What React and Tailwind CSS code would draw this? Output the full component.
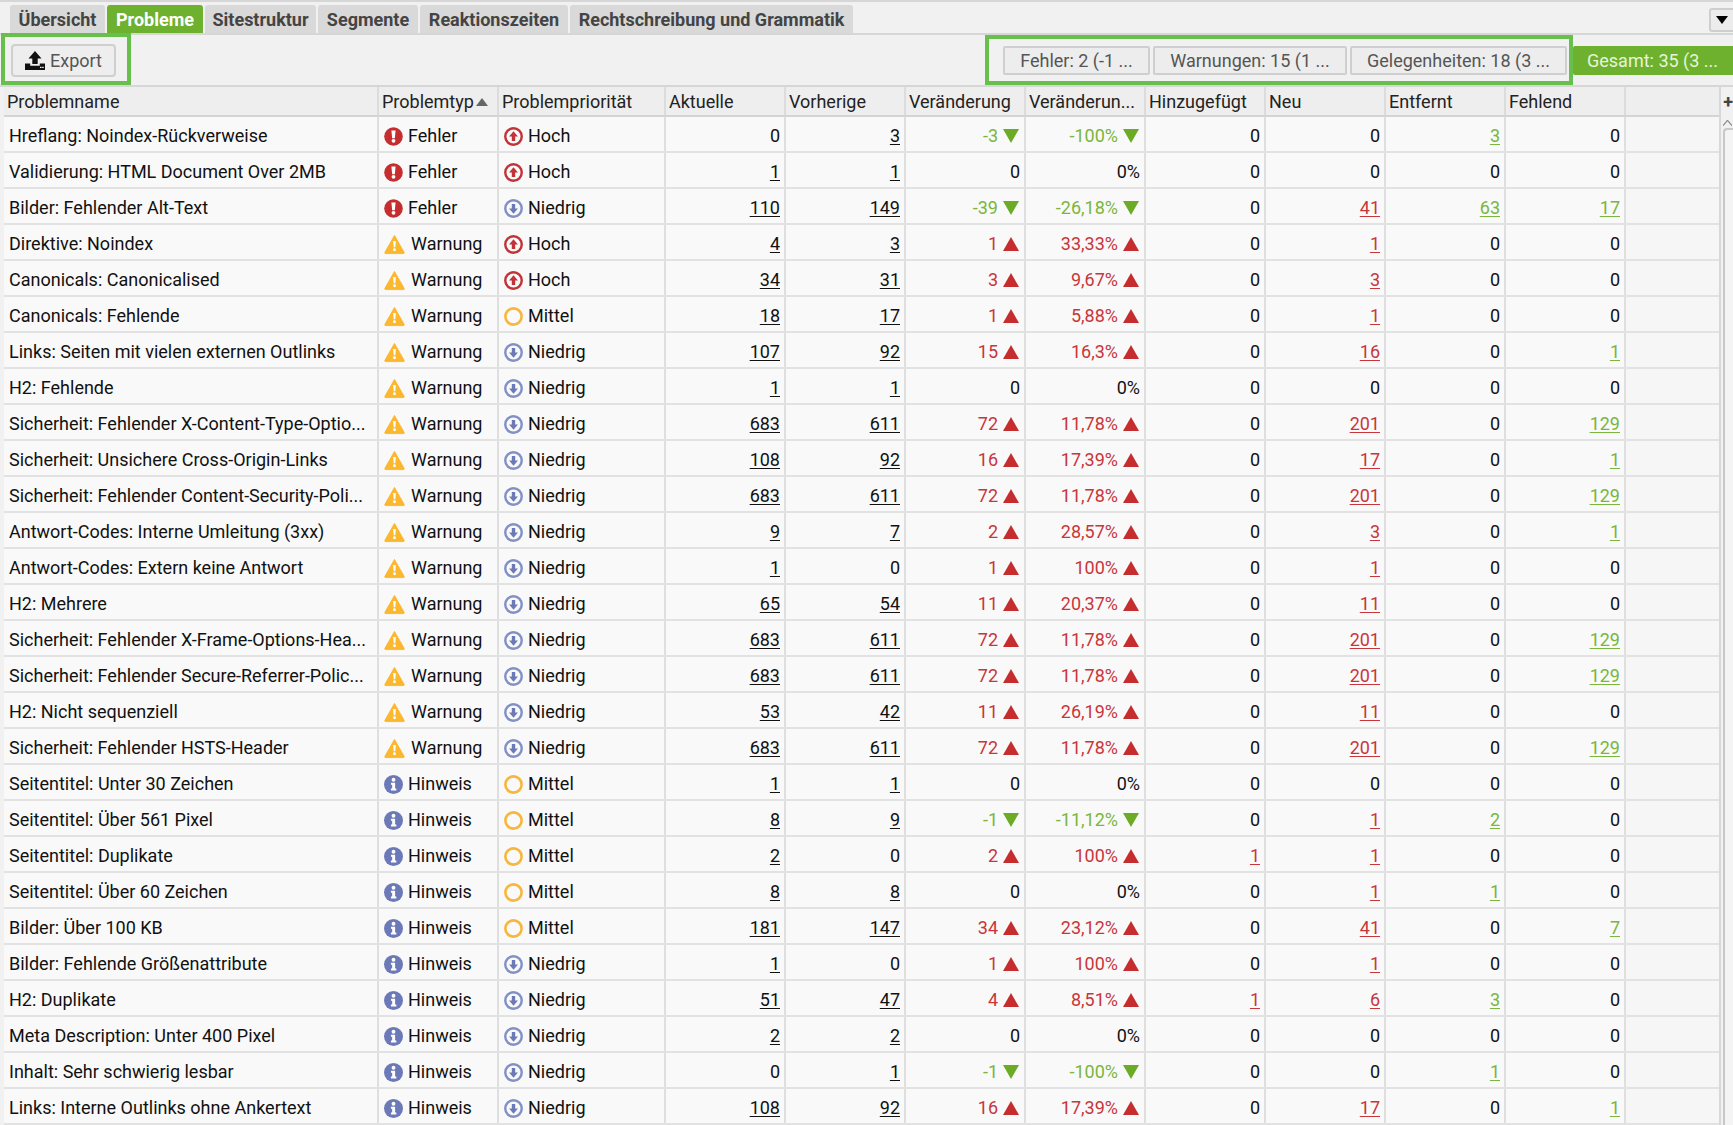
import React from "react";

// ===== ICONS =====
const FehlerIcon = () => (
  <svg viewBox="0 0 20 20" className="w-[19px] h-[19px] shrink-0">
    <circle cx="10" cy="10" r="9.8" fill="#c62d2f" />
    <path d="M7.8 3.6h4.4l-.8 8.2H8.6z" fill="#fff" />
    <circle cx="10" cy="14.6" r="2" fill="#fff" />
  </svg>
);

const WarnIcon = () => (
  <svg viewBox="0 0 22 21" className="w-[21px] h-[21px] shrink-0">
    <path d="M11 1 L21 18.6 Q21.6 20 20 20 H2 Q.4 20 1 18.6 Z" fill="#fbb72e" stroke="#fbb72e" strokeLinejoin="round" />
    <path d="M9.6 6.8h2.8l-.5 6.6h-1.8z" fill="#fff" />
    <circle cx="11" cy="16" r="1.5" fill="#fff" />
  </svg>
);

const InfoIcon = () => (
  <svg viewBox="0 0 20 20" className="w-[19px] h-[19px] shrink-0">
    <circle cx="10" cy="10" r="10" fill="#6c79b9" />
    <circle cx="10" cy="5" r="2" fill="#fff" />
    <path d="M7.3 8.2h4.4v6.1H13v2H7.3v-2h1.3v-4.1H7.3z" fill="#fff" />
  </svg>
);

const HighIcon = () => (
  <svg viewBox="0 0 18 18" className="w-[19px] h-[19px] shrink-0">
    <circle cx="9" cy="9" r="7.8" fill="none" stroke="#c23237" strokeWidth="2.3" />
    <path d="M9 4 13.2 9h-2.6v4.2H7.4V9H4.8z" fill="#c23237" />
  </svg>
);

const LowIcon = () => (
  <svg viewBox="0 0 18 18" className="w-[19px] h-[19px] shrink-0">
    <circle cx="9" cy="9" r="7.8" fill="none" stroke="#8090c8" strokeWidth="2.3" />
    <path d="M9 14 4.8 9h2.6V4.8h3.2V9h2.6z" fill="#6c79b9" />
  </svg>
);

const MidIcon = () => (
  <svg viewBox="0 0 18 18" className="w-[19px] h-[19px] shrink-0">
    <circle cx="9" cy="9" r="7.7" fill="none" stroke="#f8b73c" strokeWidth="2.5" />
  </svg>
);

const ExportIcon = () => (
  <svg viewBox="0 0 20 19" className="w-[20px] h-[19px] shrink-0">
    <path d="M10 0 16.5 7.5h-3.8v5.5H7.3V7.5H3.5z" fill="#111" />
    <path d="M0 12.5h5.2v2.2h9.6v-2.2H20V19H0z" fill="#111" />
    <rect x="15" y="15.8" width="1.5" height="1.2" fill="#fff" />
    <rect x="17.2" y="15.8" width="1.5" height="1.2" fill="#fff" />
  </svg>
);

const Up = () => (
  <svg viewBox="0 0 16 14" className="w-[16px] h-[14px] shrink-0">
    <path d="M8 0 16 14H0z" fill="#c62d2f" />
  </svg>
);

const Down = () => (
  <svg viewBox="0 0 16 14" className="w-[16px] h-[14px] shrink-0">
    <path d="M0 0h16L8 14z" fill="#6cab25" />
  </svg>
);

// ===== SAMPLE DATA =====
const E = "Fehler", W = "Warnung", H = "Hinweis";
const rows = [
  ["Hreflang: Noindex-Rückverweise", E, "Hoch", 0, 3, "-3", "-100%", 0, 0, 3, 0],
  ["Validierung: HTML Document Over 2MB", E, "Hoch", 1, 1, "0", "0%", 0, 0, 0, 0],
  ["Bilder: Fehlender Alt-Text", E, "Niedrig", 110, 149, "-39", "-26,18%", 0, 41, 63, 17],
  ["Direktive: Noindex", W, "Hoch", 4, 3, "1", "33,33%", 0, 1, 0, 0],
  ["Canonicals: Canonicalised", W, "Hoch", 34, 31, "3", "9,67%", 0, 3, 0, 0],
  ["Canonicals: Fehlende", W, "Mittel", 18, 17, "1", "5,88%", 0, 1, 0, 0],
  ["Links: Seiten mit vielen externen Outlinks", W, "Niedrig", 107, 92, "15", "16,3%", 0, 16, 0, 1],
  ["H2: Fehlende", W, "Niedrig", 1, 1, "0", "0%", 0, 0, 0, 0],
  ["Sicherheit: Fehlender X-Content-Type-Optio...", W, "Niedrig", 683, 611, "72", "11,78%", 0, 201, 0, 129],
  ["Sicherheit: Unsichere Cross-Origin-Links", W, "Niedrig", 108, 92, "16", "17,39%", 0, 17, 0, 1],
  ["Sicherheit: Fehlender Content-Security-Poli...", W, "Niedrig", 683, 611, "72", "11,78%", 0, 201, 0, 129],
  ["Antwort-Codes: Interne Umleitung (3xx)", W, "Niedrig", 9, 7, "2", "28,57%", 0, 3, 0, 1],
  ["Antwort-Codes: Extern keine Antwort", W, "Niedrig", 1, 0, "1", "100%", 0, 1, 0, 0],
  ["H2: Mehrere", W, "Niedrig", 65, 54, "11", "20,37%", 0, 11, 0, 0],
  ["Sicherheit: Fehlender X-Frame-Options-Hea...", W, "Niedrig", 683, 611, "72", "11,78%", 0, 201, 0, 129],
  ["Sicherheit: Fehlender Secure-Referrer-Polic...", W, "Niedrig", 683, 611, "72", "11,78%", 0, 201, 0, 129],
  ["H2: Nicht sequenziell", W, "Niedrig", 53, 42, "11", "26,19%", 0, 11, 0, 0],
  ["Sicherheit: Fehlender HSTS-Header", W, "Niedrig", 683, 611, "72", "11,78%", 0, 201, 0, 129],
  ["Seitentitel: Unter 30 Zeichen", H, "Mittel", 1, 1, "0", "0%", 0, 0, 0, 0],
  ["Seitentitel: Über 561 Pixel", H, "Mittel", 8, 9, "-1", "-11,12%", 0, 1, 2, 0],
  ["Seitentitel: Duplikate", H, "Mittel", 2, 0, "2", "100%", 1, 1, 0, 0],
  ["Seitentitel: Über 60 Zeichen", H, "Mittel", 8, 8, "0", "0%", 0, 1, 1, 0],
  ["Bilder: Über 100 KB", H, "Mittel", 181, 147, "34", "23,12%", 0, 41, 0, 7],
  ["Bilder: Fehlende Größenattribute", H, "Niedrig", 1, 0, "1", "100%", 0, 1, 0, 0],
  ["H2: Duplikate", H, "Niedrig", 51, 47, "4", "8,51%", 1, 6, 3, 0],
  ["Meta Description: Unter 400 Pixel", H, "Niedrig", 2, 2, "0", "0%", 0, 0, 0, 0],
  ["Inhalt: Sehr schwierig lesbar", H, "Niedrig", 0, 1, "-1", "-100%", 0, 0, 1, 0],
  ["Links: Interne Outlinks ohne Ankertext", H, "Niedrig", 108, 92, "16", "17,39%", 0, 17, 0, 1],
];

const tabs = [
  ["Übersicht", "w-[95px]"],
  ["Probleme", "w-[96px]"],
  ["Sitestruktur", "w-[111px]"],
  ["Segmente", "w-[100px]"],
  ["Reaktionszeiten", "w-[148px]"],
  ["Rechtschreibung und Grammatik", "w-[283px]"],
];

const headers = ["Problemname", "Problemtyp", "Problempriorität", "Aktuelle", "Vorherige", "Veränderung", "Veränderun...", "Hinzugefügt", "Neu", "Entfernt", "Fehlend", ""];

const gridCols = "grid grid-cols-[375px_120px_167px_repeat(8,120px)_1fr]";
const cell = "flex items-center border-r-2 border-[#dfdfdf] min-w-0 pt-[4px]";

// ===== CELLS =====
const NumCell = ({ value, color = "text-[#111]" }) => (
  <div className={`${cell} justify-end pr-[4px] ${color}`}>
    {value === 0 ? "0" : <span className="underline underline-offset-2">{value}</span>}
  </div>
);

const DeltaCell = ({ value }) => {
  const neg = value.startsWith("-");
  const zero = value === "0" || value === "0%";
  if (zero) return <div className={`${cell} justify-end pr-[4px]`}>{value}</div>;
  return (
    <div className={`${cell} justify-end gap-[5px] pr-[5px] ${neg ? "text-[#7ab63c]" : "text-[#c8363a]"}`}>
      {value}
      {neg ? <Down /> : <Up />}
    </div>
  );
};

const Row = ({ r }) => {
  const [name, type, prio, cur, prev, delta, pct, added, neu, removed, missing] = r;
  return (
    <div className={`${gridCols} h-[36px] border-b-2 border-[#e2e2e2] bg-[#f9f9f9]`}>
      <div className={`${cell} pl-[5px] whitespace-nowrap`}>{name}</div>
      <div className={`${cell} pl-[5px] ${type === H ? "gap-[5px]" : type === E ? "gap-[5px]" : "gap-[6px]"}`}>
        {type === E && <FehlerIcon />}
        {type === W && <WarnIcon />}
        {type === H && <InfoIcon />}
        {type}
      </div>
      <div className={`${cell} pl-[5px] gap-[5px]`}>
        {prio === "Hoch" && <HighIcon />}
        {prio === "Mittel" && <MidIcon />}
        {prio === "Niedrig" && <LowIcon />}
        {prio}
      </div>
      <NumCell value={cur} />
      <NumCell value={prev} />
      <DeltaCell value={delta} />
      <DeltaCell value={pct} />
      <NumCell value={added} color={added ? "text-[#c8363a]" : "text-[#111]"} />
      <NumCell value={neu} color={neu ? "text-[#c8363a]" : "text-[#111]"} />
      <NumCell value={removed} color={removed ? "text-[#7ab63c]" : "text-[#111]"} />
      <NumCell value={missing} color={missing ? "text-[#7ab63c]" : "text-[#111]"} />
      <div className="bg-[#f6f6f6]" />
    </div>
  );
};

const FilterBtn = ({ children, width }) => (
  <button className={`${width} h-[29px] flex items-center justify-center rounded-[2px] border-2 border-[#cfcfcf] bg-[#ededed] text-[#555]`}>
    {children}
  </button>
);

export default function App() {
  return (
    <div className="w-[1733px] h-[1125px] overflow-hidden bg-[#f1f1f1] text-[18px] leading-none text-[#111] font-['Roboto',sans-serif]">
      {/* ===== TABS ===== */}
      <div className="h-[35px] border-t-2 border-b-2 border-[#d6d6d6] flex justify-between pt-[3px]">
        <div className="flex gap-[2px] pl-[10px]">
          {tabs.map(([label, w]) => (
            <div
              key={label}
              className={`${w} flex items-center justify-center rounded-t-[3px] font-bold pt-[2px] ${label === "Probleme" ? "bg-[#6db12e] text-white" : "bg-[#d9d9d9] text-[#444]"}`}
            >
              {label}
            </div>
          ))}
        </div>
        <div className="w-[24px] h-[24px] mt-[3px] rounded-l-[3px] border-2 border-r-0 border-[#cfcfcf] bg-[#ececec] flex items-center justify-center">
          <span className="w-0 h-0 border-x-[6px] border-x-transparent border-t-[8px] border-t-black" />
        </div>
      </div>

      {/* ===== TOOLBAR ===== */}
      <div className="h-[50px] flex justify-between items-start pl-[1px]">
        <div className="w-[130px] h-[52px] -mt-[2px] border-[4px] border-[#68c04c] flex items-center pl-[6px] pt-[3px]">
          <button className="w-[105px] h-[33px] flex items-center gap-[5px] pl-[12px] rounded-[4px] border-2 border-[#cfcfcf] bg-[#eeeeee] text-[#555]">
            <ExportIcon />
            Export
          </button>
        </div>
        <div className="flex">
          <div className="w-[588px] h-[50px] border-[4px] border-[#68c04c] flex items-center gap-[3px] pl-[14px] pt-[1px]">
            <FilterBtn width="w-[147px]">Fehler: 2 (-1 ...</FilterBtn>
            <FilterBtn width="w-[194px]">Warnungen: 15 (1 ...</FilterBtn>
            <FilterBtn width="w-[217px]">Gelegenheiten: 18 (3 ...</FilterBtn>
          </div>
          <div className="w-[160px] h-[29px] mt-[11px] flex items-center pl-[14px] bg-[#6db12e] text-[#e8f4da] rounded-l-[2px] whitespace-nowrap">
            Gesamt: 35 (3 ...
          </div>
        </div>
      </div>

      {/* ===== TABLE ===== */}
      <div className="flex pl-[4px] border-t-2 border-[#d6d6d6]">
        <div className="w-[1718px]">
          <div className={`${gridCols} h-[30px] bg-[#eeeeee] border-b-2 border-[#d4d4d4] text-[#222]`}>
            {headers.map((h, i) => (
              <div
                key={i}
                className={`flex items-center pt-[2px] pl-[3px] whitespace-nowrap ${i === 11 ? "" : "border-r-2 border-[#dcdcdc]"}`}
              >
                {h}
                {i === 1 && (
                  <span className="ml-[2px] w-0 h-0 border-x-[6px] border-x-transparent border-b-[8px] border-b-[#666]" />
                )}
              </div>
            ))}
          </div>
          {rows.map((r, i) => (
            <Row key={i} r={r} />
          ))}
        </div>

        {/* ===== SCROLL COLUMN ===== */}
        <div className="flex-1 flex flex-col border-l-2 border-[#d8d8d8] pl-[2px]">
          <span className="h-[30px] flex items-center text-[#444] font-bold leading-none">+</span>
          <svg viewBox="0 0 10 6" className="w-[9px] h-[6px] mt-[3px] shrink-0">
            <path d="M0 6 5 0l5 6" fill="none" stroke="#888" strokeWidth="1.2" />
          </svg>
          <div className="mt-[2px] flex-1 rounded-tl-[4px] border-l-2 border-t-2 border-[#c8c8c8] bg-[#f4f4f4]" />
        </div>
      </div>
    </div>
  );
}
